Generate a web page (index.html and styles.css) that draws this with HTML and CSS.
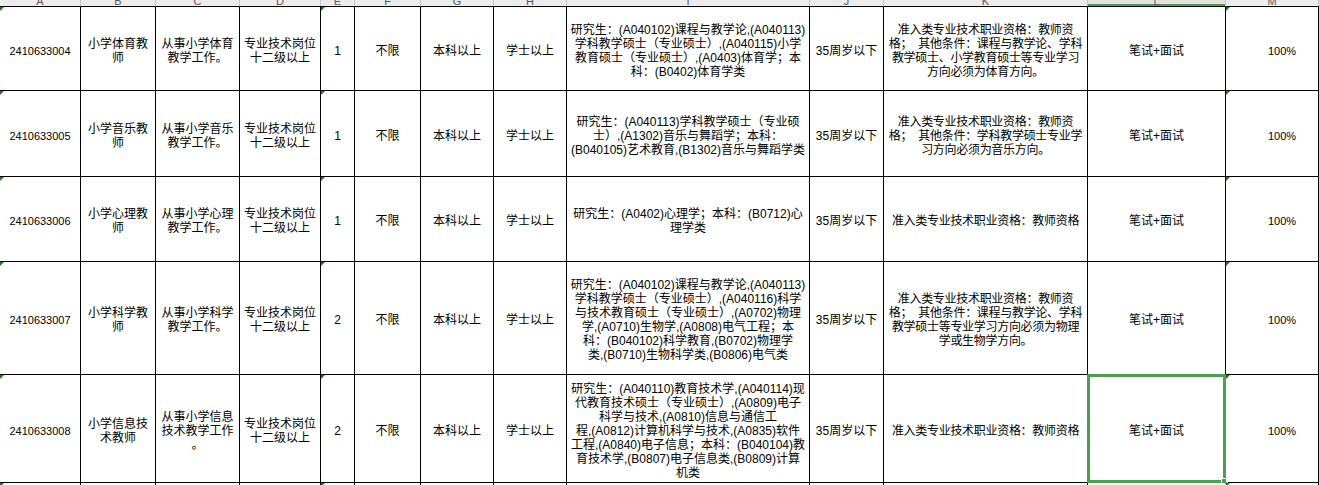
FILE: index.html
```html
<!DOCTYPE html>
<html lang="zh-CN">
<head>
<meta charset="utf-8">
<title>岗位表</title>
<link rel="stylesheet" href="styles.css">
</head>
<body>
<div class="sheet">
  <div class="cols colhead">
    <div class="ch"><span>A</span></div>
    <div class="ch"><span>B</span></div>
    <div class="ch"><span>C</span></div>
    <div class="ch"><span>D</span></div>
    <div class="ch"><span>E</span></div>
    <div class="ch"><span>F</span></div>
    <div class="ch"><span>G</span></div>
    <div class="ch"><span>H</span></div>
    <div class="ch"><span>I</span></div>
    <div class="ch"><span>J</span></div>
    <div class="ch"><span>K</span></div>
    <div class="ch ch-sel"><span>L</span></div>
    <div class="ch"><span>M</span></div>
    <div class="ch"><span>N</span></div>
  </div>

  <div class="cols grid">
    <!-- row 1 -->
    <div class="c flag num">2410633004</div>
    <div class="c">小学体育教<br>师</div>
    <div class="c">从事小学体育<br>教学工作。</div>
    <div class="c">专业技术岗位<br>十二级以上</div>
    <div class="c flag">1</div>
    <div class="c">不限</div>
    <div class="c">本科以上</div>
    <div class="c">学士以上</div>
    <div class="c">研究生：(A040102)课程与教学论,(A040113)<br>学科教学硕士（专业硕士）,(A040115)小学<br>教育硕士（专业硕士）,(A0403)体育学；本<br>科：(B0402)体育学类</div>
    <div class="c">35周岁以下</div>
    <div class="c k">准入类专业技术职业资格：教师资<br>格；&nbsp; 其他条件：课程与教学论、学科<br>教学硕士、小学教育硕士等专业学习<br>方向必须为体育方向。</div>
    <div class="c">笔试+面试</div>
    <div class="c flag pct">100%</div>
    <div class="c"></div>

    <!-- row 2 -->
    <div class="c flag num">2410633005</div>
    <div class="c">小学音乐教<br>师</div>
    <div class="c">从事小学音乐<br>教学工作。</div>
    <div class="c">专业技术岗位<br>十二级以上</div>
    <div class="c flag">1</div>
    <div class="c">不限</div>
    <div class="c">本科以上</div>
    <div class="c">学士以上</div>
    <div class="c">研究生：(A040113)学科教学硕士（专业硕<br>士）,(A1302)音乐与舞蹈学；本科：<br>(B040105)艺术教育,(B1302)音乐与舞蹈学类</div>
    <div class="c">35周岁以下</div>
    <div class="c k">准入类专业技术职业资格：教师资<br>格；&nbsp; 其他条件：学科教学硕士专业学<br>习方向必须为音乐方向。</div>
    <div class="c">笔试+面试</div>
    <div class="c flag pct">100%</div>
    <div class="c"></div>

    <!-- row 3 -->
    <div class="c flag num">2410633006</div>
    <div class="c">小学心理教<br>师</div>
    <div class="c">从事小学心理<br>教学工作。</div>
    <div class="c">专业技术岗位<br>十二级以上</div>
    <div class="c flag">1</div>
    <div class="c">不限</div>
    <div class="c">本科以上</div>
    <div class="c">学士以上</div>
    <div class="c">研究生：(A0402)心理学；本科：(B0712)心<br>理学类</div>
    <div class="c">35周岁以下</div>
    <div class="c k">准入类专业技术职业资格：教师资格</div>
    <div class="c">笔试+面试</div>
    <div class="c flag pct">100%</div>
    <div class="c"></div>

    <!-- row 4 -->
    <div class="c flag num">2410633007</div>
    <div class="c">小学科学教<br>师</div>
    <div class="c">从事小学科学<br>教学工作。</div>
    <div class="c">专业技术岗位<br>十二级以上</div>
    <div class="c flag">2</div>
    <div class="c">不限</div>
    <div class="c">本科以上</div>
    <div class="c">学士以上</div>
    <div class="c">研究生：(A040102)课程与教学论,(A040113)<br>学科教学硕士（专业硕士）,(A040116)科学<br>与技术教育硕士（专业硕士）,(A0702)物理<br>学,(A0710)生物学,(A0808)电气工程；本<br>科：(B040102)科学教育,(B0702)物理学<br>类,(B0710)生物科学类,(B0806)电气类</div>
    <div class="c">35周岁以下</div>
    <div class="c k">准入类专业技术职业资格：教师资<br>格；&nbsp; 其他条件：课程与教学论、学科<br>教学硕士等专业学习方向必须为物理<br>学或生物学方向。</div>
    <div class="c">笔试+面试</div>
    <div class="c flag pct">100%</div>
    <div class="c"></div>

    <!-- row 5 -->
    <div class="c flag num">2410633008</div>
    <div class="c">小学信息技<br>术教师</div>
    <div class="c">从事小学信息<br>技术教学工作<br>。</div>
    <div class="c">专业技术岗位<br>十二级以上</div>
    <div class="c flag">2</div>
    <div class="c">不限</div>
    <div class="c">本科以上</div>
    <div class="c">学士以上</div>
    <div class="c">研究生：(A040110)教育技术学,(A040114)现<br>代教育技术硕士（专业硕士）,(A0809)电子<br>科学与技术,(A0810)信息与通信工<br>程,(A0812)计算机科学与技术,(A0835)软件<br>工程,(A0840)电子信息；本科：(B040104)教<br>育技术学,(B0807)电子信息类,(B0809)计算<br>机类</div>
    <div class="c">35周岁以下</div>
    <div class="c k">准入类专业技术职业资格：教师资格</div>
    <div class="c selected">笔试+面试<span class="selbox"><span class="handle"></span></span></div>
    <div class="c flag pct">100%</div>
    <div class="c"></div>

    <!-- row 6 (partially visible) -->
    <div class="c flag"></div>
    <div class="c"></div>
    <div class="c"></div>
    <div class="c"></div>
    <div class="c flag"></div>
    <div class="c"></div>
    <div class="c"></div>
    <div class="c"></div>
    <div class="c"></div>
    <div class="c"></div>
    <div class="c"></div>
    <div class="c"></div>
    <div class="c flag"></div>
    <div class="c"></div>
  </div>
</div>
</body>
</html>
```

FILE: styles.css
```css
html, body {
  margin: 0;
  padding: 0;
  background: #ffffff;
  overflow: hidden;
}

.sheet {
  width: max-content;
  font-family: "Liberation Sans", "Noto Sans CJK SC", sans-serif;
  color: #000;
}

.cols {
  display: grid;
  grid-template-columns: 80px 74px 83px 80px 33px 65px 72px 72px 242px 73px 203px 137px 92px 80px;
  column-gap: 1px;
}

/* column header strip (mostly scrolled out of view) */
.colhead {
  height: 6px;
  background: #c6c6c6;
  overflow: hidden;
}

.ch {
  background: #ececec;
  height: 6px;
  overflow: hidden;
  text-align: center;
  color: #5a5a5a;
  font-size: 11px;
  position: relative;
}

.ch span {
  display: block;
  line-height: 14px;
  margin-top: -6px;
}

.ch-sel {
  background: #e2e2e2;
  box-shadow: inset 0 -2px 0 #4a9d4f;
}

/* body grid with black gridlines */
.grid {
  grid-template-rows: 83px 85px 84px 112px 107px 20px;
  row-gap: 1px;
  background: #000;
  padding-top: 1px;
}

.c {
  background: #fff;
  position: relative;
  display: flex;
  align-items: center;
  justify-content: center;
  text-align: center;
  white-space: nowrap;
  font-size: 12px;
  line-height: 14px;
  padding-top: 4px;
  box-sizing: border-box;
}

.num {
  font-size: 11px;
}

.k {
  letter-spacing: -0.3px;
}

.pct {
  padding-left: 20px;
  font-size: 11px;
}

/* green "number stored as text" marker */
.flag::before {
  content: "";
  position: absolute;
  top: 0;
  left: 0;
  width: 0;
  height: 0;
  border-top: 4px solid #1f7a1f;
  border-right: 4px solid transparent;
}

/* active cell selection */
.selbox {
  position: absolute;
  top: -1px;
  left: -1px;
  right: -1px;
  bottom: -1px;
  border: 3px solid #4b9f4f;
}

.handle {
  position: absolute;
  right: -5px;
  bottom: -5px;
  width: 5px;
  height: 5px;
  background: #4b9f4f;
  border: 1px solid #fff;
}
```
